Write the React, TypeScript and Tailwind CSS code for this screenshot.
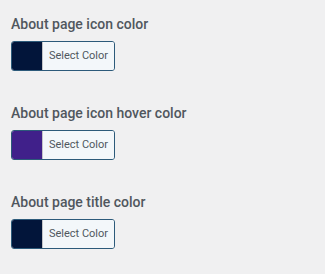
import React from "react";

const items = [
  { label: "About page icon color", color: "#02153a" },
  { label: "About page icon hover color", color: "#40208a" },
  { label: "About page title color", color: "#02153a" },
];

export default function App() {
  return (
    <div
      className="w-[325px] h-[274px] bg-[#f0f0f1] pl-[11px] pt-[14px] flex flex-col gap-[32px]"
      style={{ fontFamily: "Roboto, 'Liberation Sans', sans-serif" }}
    >
      {items.map((it) => (
        <div key={it.label} className="flex flex-col gap-[7px]">
          <div className="text-[14px] leading-[20px] font-medium text-[#50575e]">{it.label}</div>
          <button className="flex w-[104px] h-[30px] rounded-[3px] border border-[#2c5a7a] overflow-hidden p-0">
            <span className="w-[30px] h-full shrink-0" style={{ background: it.color }} />
            <span className="flex-1 h-full bg-[#f3f7fa] border-l border-[#c3c4c7] text-[11px] leading-[28px] text-[#50575e] text-center">
              Select Color
            </span>
          </button>
        </div>
      ))}
    </div>
  );
}
